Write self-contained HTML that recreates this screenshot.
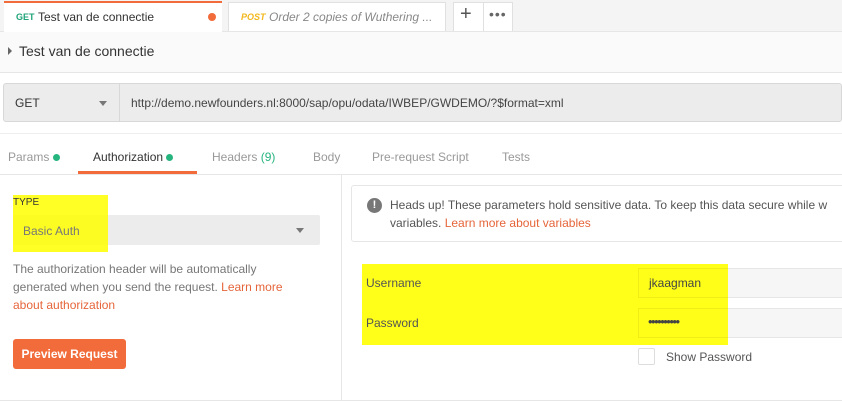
<!DOCTYPE html><html><head><style>
body{margin:0;width:842px;height:403px;overflow:hidden;background:#fff;font-family:"Liberation Sans",sans-serif;font-size:12px;color:#505050;position:relative}
.a{position:absolute}
</style></head><body>
<div class="a" style="left:0;top:0;width:842px;height:31px;background:#f4f4f4;border-bottom:1px solid #e6e6e6"></div>
<div class="a" style="left:4px;top:1px;width:218px;height:31px;background:#fff;border-top:2px solid #f26b3a;box-sizing:border-box"></div>
<div class="a" style="left:16px;top:12px;font-size:9px;font-weight:bold;color:#1fa378">GET</div>
<div class="a" style="left:38px;top:10px;font-size:12px;color:#333">Test van de connectie</div>
<div class="a" style="left:208px;top:13px;width:8px;height:8px;border-radius:50%;background:#f26b3a"></div>
<div class="a" style="left:228px;top:2px;width:218px;height:29px;background:#fff;border:1px solid #e0e0e0;border-bottom:none;box-sizing:border-box"></div>
<div class="a" style="left:241px;top:12px;font-size:9px;font-weight:bold;font-style:italic;color:#f2b81e">POST</div>
<div class="a" style="left:269px;top:10px;font-size:12px;font-style:italic;color:#888">Order 2 copies of Wuthering ...</div>
<div class="a" style="left:453px;top:2px;width:60px;height:29px;background:#fff;border:1px solid #e0e0e0;border-bottom:none;box-sizing:border-box"></div>
<div class="a" style="left:483px;top:2px;width:1px;height:29px;background:#e0e0e0"></div>
<div class="a" style="left:460px;top:3px;font-size:20px;color:#555">+</div>
<div class="a" style="left:489px;top:6px;font-size:14px;color:#666;letter-spacing:1px">•••</div>
<div class="a" style="left:0;top:32px;width:842px;height:40px;background:#fafafa;border-bottom:1px solid #e6e6e6"></div>
<div class="a" style="left:8px;top:47px;width:0;height:0;border-left:4px solid #666;border-top:4px solid transparent;border-bottom:4px solid transparent"></div>
<div class="a" style="left:19px;top:43px;font-size:14px;color:#333">Test van de connectie</div>
<div class="a" style="left:3px;top:83px;width:839px;height:39px;background:#ececec;border:1px solid #d8d8d8;border-radius:3px;box-sizing:border-box"></div>
<div class="a" style="left:119px;top:84px;width:1px;height:37px;background:#d8d8d8"></div>
<div class="a" style="left:15px;top:96px;font-size:12px;color:#333">GET</div>
<div class="a" style="left:99px;top:101px;border-top:5px solid #777;border-left:4px solid transparent;border-right:4px solid transparent"></div>
<div class="a" style="left:131px;top:96px;font-size:12px;color:#444">http://demo.newfounders.nl:8000/sap/opu/odata/IWBEP/GWDEMO/?$format=xml</div>
<div class="a" style="left:0;top:133px;width:842px;height:1px;background:#eee"></div>
<div class="a" style="left:8px;top:150px;font-size:12px;color:#999">Params <span style="display:inline-block;width:7px;height:7px;border-radius:50%;background:#26b47f"></span></div>
<div class="a" style="left:93px;top:150px;font-size:12px;color:#333">Authorization <span style="display:inline-block;width:7px;height:7px;border-radius:50%;background:#26b47f"></span></div>
<div class="a" style="left:212px;top:150px;font-size:12px;color:#999">Headers <span style="color:#26b47f">(9)</span></div>
<div class="a" style="left:313px;top:150px;font-size:12px;color:#999">Body</div>
<div class="a" style="left:372px;top:150px;font-size:12px;color:#999">Pre-request Script</div>
<div class="a" style="left:502px;top:150px;font-size:12px;color:#999">Tests</div>
<div class="a" style="left:78px;top:171px;width:119px;height:3px;background:#f26b3a"></div>
<div class="a" style="left:0;top:174px;width:842px;height:1px;background:#e6e6e6"></div>
<div class="a" style="left:341px;top:175px;width:1px;height:225px;background:#e6e6e6"></div>
<div class="a" style="left:0;top:400px;width:842px;height:1px;background:#e6e6e6"></div>
<div class="a" style="left:13px;top:215px;width:307px;height:30px;background:#ececec;border-radius:2px"></div>
<div class="a" style="left:296px;top:228px;border-top:5px solid #777;border-left:4px solid transparent;border-right:4px solid transparent"></div>
<div class="a" style="left:13px;top:195px;width:95px;height:57px;background:rgba(255,255,0,.85)"></div>
<div class="a" style="left:13px;top:197px;font-size:10px;color:#333">TYPE</div>
<div class="a" style="left:23px;top:224px;font-size:12px;color:#777">Basic Auth</div>
<div class="a" style="left:13px;top:260px;font-size:12px;line-height:18px;color:#777;width:290px">The authorization header will be automatically generated when you send the request. <span style="color:#e5653a">Learn more about authorization</span></div>
<div class="a" style="left:13px;top:339px;width:113px;height:30px;background:#f26b3a;border-radius:3px;color:#fff;font-size:12px;font-weight:bold;line-height:30px;text-align:center">Preview Request</div>
<div class="a" style="left:351px;top:185px;width:500px;height:57px;border:1px solid #e6e6e6;border-radius:3px;box-sizing:border-box"></div>
<div class="a" style="left:367px;top:198px;width:15px;height:15px;border-radius:50%;background:#777;color:#fff;font-size:11px;font-weight:bold;text-align:center;line-height:15px">!</div>
<div class="a" style="left:390px;top:196px;font-size:12px;line-height:18px;color:#555;white-space:nowrap">Heads up! These parameters hold sensitive data. To keep this data secure while w<br>variables. <span style="color:#e5653a">Learn more about variables</span></div>
<div class="a" style="left:638px;top:268px;width:210px;height:30px;background:#f6f6f6;border:1px solid #e6e6e6;border-radius:2px;box-sizing:border-box"></div>
<div class="a" style="left:638px;top:308px;width:210px;height:30px;background:#f6f6f6;border:1px solid #e6e6e6;border-radius:2px;box-sizing:border-box"></div>
<div class="a" style="left:362px;top:264px;width:366px;height:81px;background:rgba(255,255,0,.9)"></div>
<div class="a" style="left:638px;top:268px;width:90px;height:30px;border:1px solid rgba(0,0,0,.06);border-right:none;box-sizing:border-box"></div>
<div class="a" style="left:638px;top:308px;width:90px;height:30px;border:1px solid rgba(0,0,0,.06);border-right:none;box-sizing:border-box"></div>
<div class="a" style="left:366px;top:276px;font-size:12px;color:#555">Username</div>
<div class="a" style="left:366px;top:316px;font-size:12px;color:#555">Password</div>
<div class="a" style="left:649px;top:276px;font-size:12px;color:#444">jkaagman</div>
<div class="a" style="left:648px;top:314px;font-size:13px;color:#444;letter-spacing:-1.5px">••••••••••</div>
<div class="a" style="left:638px;top:348px;width:17px;height:17px;border:1px solid #ddd;border-radius:2px;box-sizing:border-box"></div>
<div class="a" style="left:666px;top:350px;font-size:12px;color:#555">Show Password</div>
</body></html>
